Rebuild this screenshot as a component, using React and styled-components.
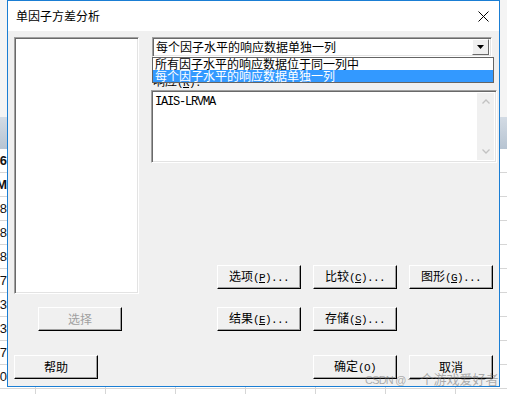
import React from "react";
import styled, { createGlobalStyle } from "styled-components";

const GlobalStyle = createGlobalStyle`
  html, body { margin: 0; padding: 0; }
  body {
    width: 507px;
    height: 394px;
    overflow: hidden;
    font-family: "Noto Sans CJK SC", sans-serif;
  }
`;

/* spreadsheet behind the dialog */
const Sheet = styled.div`
  position: relative;
  width: 507px;
  height: 394px;
  overflow: hidden;
  background: #fff;
  display: flex;
  flex-direction: column;
`;

const SheetTop = styled.div`
  height: 117px;
  flex: none;
  background: #f4f4f4;
`;

const SheetHead = styled.div`
  height: 32px;
  flex: none;
  background: linear-gradient(#d3dbe4, #b7c4d2);
`;

const SheetRow = styled.div`
  height: 24px;
  flex: none;
  box-sizing: border-box;
  border-bottom: 1px solid #d6d6d6;
  background: repeating-linear-gradient(
    to right,
    transparent 0 35px,
    #d6d6d6 35px 36px,
    transparent 36px 70px
  );
  display: flex;
  align-items: center;
`;

const EdgeCell = styled.div`
  width: 7px;
  overflow: hidden;
  display: flex;
  justify-content: flex-end;
  white-space: nowrap;
  font-family: "Liberation Sans", sans-serif;
  font-size: 13px;
  font-weight: ${(p) => (p.$bold ? 700 : 400)};
  color: #111;
`;

/* dialog window */
const Dialog = styled.div`
  position: absolute;
  left: 7px;
  top: 0;
  width: 493px;
  height: 387px;
  box-sizing: border-box;
  border: 1px solid #1a7ed4;
  display: flex;
  flex-direction: column;
  color: #000;
  font-size: 12px;
  line-height: 12px;
`;

const TitleBar = styled.div`
  height: 30px;
  flex: none;
  background: #fff;
  display: flex;
  align-items: center;
  justify-content: space-between;
  padding: 0 10px 0 8px;
  font-size: 12px;
`;

const Client = styled.div`
  flex: 1;
  background: #f0f0f0;
  padding: 6px 2px 7px 6px;
  display: flex;
  flex-direction: column;
`;

const Main = styled.div`
  display: grid;
  grid-template-columns: 125px 346px;
  column-gap: 12px;
`;

const LeftCol = styled.div`
  display: flex;
  flex-direction: column;
  align-items: flex-start;
`;

const RightCol = styled.div`
  position: relative;
  display: flex;
  flex-direction: column;
  align-items: flex-start;
`;

const sunken = `
  box-sizing: border-box;
  border: 1px solid;
  border-color: #a0a0a0 #fff #fff #a0a0a0;
  box-shadow: inset 1px 1px #696969, inset -1px -1px #e3e3e3;
  background: #fff;
`;

const ListBox = styled.div`
  ${sunken}
  width: 125px;
  height: 257px;
`;

const Combo = styled.div`
  ${sunken}
  margin-left: 1px;
  width: 340px;
  height: 20px;
  padding: 2px;
  display: flex;
  align-items: center;
`;

const ComboText = styled.span`
  flex: 1;
  padding-left: 1px;
`;

const DropButton = styled.div`
  width: 17px;
  height: 16px;
  box-sizing: border-box;
  border: 1px solid;
  border-color: #fff #696969 #696969 #fff;
  background: #f0f0f0;
  display: flex;
  align-items: center;
  justify-content: center;
`;

const DropList = styled.div`
  position: absolute;
  left: 1px;
  top: 20px;
  width: 342px;
  box-sizing: border-box;
  border: 1px solid #646464;
  background: #fff;
  z-index: 2;
`;

const DropItem = styled.div`
  height: 12px;
  line-height: 12px;
  padding-left: 2px;
  white-space: nowrap;
  background: ${(p) => (p.$selected ? "#3399ff" : "#fff")};
  color: ${(p) => (p.$selected ? "#fff" : "#000")};
`;

const FieldLabel = styled.div`
  margin: 18px 0 0 2px;
  height: 15px;
  line-height: 12px;
`;

const TextBox = styled.div`
  ${sunken}
  width: 346px;
  height: 73px;
  padding: 2px;
  display: flex;
`;

const TextContent = styled.div`
  flex: 1;
  padding: 3px 0 0 1px;
  font-family: "Liberation Mono", monospace;
  font-size: 12px;
  letter-spacing: -1.2px;
  line-height: 12px;
`;

const ScrollTrack = styled.div`
  width: 17px;
  background: #f0f0f0;
  display: flex;
  flex-direction: column;
  justify-content: space-between;
`;

const ScrollArrow = styled.div`
  height: 17px;
  display: flex;
  align-items: center;
  justify-content: center;
`;

const ButtonGrid = styled.div`
  margin: 102px 0 0 66px;
  display: grid;
  grid-template-columns: repeat(3, 84px);
  grid-auto-rows: 24px;
  column-gap: 12px;
  row-gap: 18px;
`;

const Button = styled.button`
  width: 84px;
  height: 24px;
  margin: 0;
  padding: 0;
  box-sizing: border-box;
  border: 1px solid;
  border-color: #fff #000 #000 #fff;
  box-shadow: inset -1px -1px #a0a0a0;
  background: #f0f0f0;
  font-family: "Noto Sans CJK SC", sans-serif;
  font-size: 12px;
  line-height: 12px;
  color: ${(p) => (p.disabled ? "#a0a0a0" : "#000")};
  white-space: nowrap;
`;

const SelectButton = styled(Button)`
  margin: 13px 0 0 24px;
`;

const Footer = styled.div`
  margin-top: 24px;
  padding-right: 4px;
  display: flex;
  gap: 12px;
`;

const FooterRight = styled.div`
  margin-left: auto;
  display: flex;
  gap: 12px;
`;

const Latin = styled.span`
  font-family: "Liberation Mono", monospace;
  font-size: 11px;
  letter-spacing: -0.6px;
`;

const Key = styled.span`
  text-decoration: underline;
  text-underline-offset: 1px;
`;

const Watermark = styled.div`
  position: absolute;
  left: 365px;
  top: 371px;
  font-family: "Noto Sans CJK SC", sans-serif;
  font-size: 13px;
  line-height: 16px;
  color: rgba(110, 110, 110, 0.55);
  white-space: nowrap;
  z-index: 5;
`;

const WatermarkLatin = styled.span`
  font-family: "Liberation Sans", sans-serif;
  font-size: 11px;
  letter-spacing: -0.8px;
  margin-right: 2px;
`;

function Mnemonic({ cn, k, tail = "" }) {
  return (
    <>
      {cn}
      <Latin>
        (<Key>{k}</Key>){tail}
      </Latin>
    </>
  );
}

const leftDigits = [
  ["6", true],
  ["M", true],
  ["8"],
  ["8"],
  ["8"],
  ["7"],
  ["3"],
  ["3"],
  ["7"],
  ["0"],
  [""],
];

export default function App() {
  return (
    <Sheet>
      <GlobalStyle />
      <SheetTop />
      <SheetHead />
      {leftDigits.map(([d, bold], i) => (
        <SheetRow key={i}>
          <EdgeCell $bold={bold}>{d}</EdgeCell>
        </SheetRow>
      ))}

      <Dialog>
        <TitleBar>
          <span>单因子方差分析</span>
          <svg width="11" height="11" viewBox="0 0 11 11">
            <path d="M0.5 0.5 L10.5 10.5 M10.5 0.5 L0.5 10.5" stroke="#000" strokeWidth="1" />
          </svg>
        </TitleBar>

        <Client>
          <Main>
            <LeftCol>
              <ListBox />
              <SelectButton disabled>选择</SelectButton>
            </LeftCol>

            <RightCol>
              <Combo>
                <ComboText>每个因子水平的响应数据单独一列</ComboText>
                <DropButton>
                  <svg width="7" height="4" viewBox="0 0 7 4">
                    <path d="M0 0 H7 L3.5 4 Z" fill="#000" />
                  </svg>
                </DropButton>
              </Combo>
              <DropList>
                <DropItem>所有因子水平的响应数据位于同一列中</DropItem>
                <DropItem $selected>每个因子水平的响应数据单独一列</DropItem>
              </DropList>

              <FieldLabel>
                <Mnemonic cn="响应" k="R" tail=":" />
              </FieldLabel>
              <TextBox>
                <TextContent>IAIS-LRVMA</TextContent>
                <ScrollTrack>
                  <ScrollArrow>
                    <svg width="8" height="5" viewBox="0 0 8 5">
                      <path d="M0.5 4.5 L4 1 L7.5 4.5" stroke="#c2c2c2" strokeWidth="1.3" fill="none" />
                    </svg>
                  </ScrollArrow>
                  <ScrollArrow>
                    <svg width="8" height="5" viewBox="0 0 8 5">
                      <path d="M0.5 0.5 L4 4 L7.5 0.5" stroke="#c2c2c2" strokeWidth="1.3" fill="none" />
                    </svg>
                  </ScrollArrow>
                </ScrollTrack>
              </TextBox>

              <ButtonGrid>
                <Button>
                  <Mnemonic cn="选项" k="P" tail="..." />
                </Button>
                <Button>
                  <Mnemonic cn="比较" k="C" tail="..." />
                </Button>
                <Button>
                  <Mnemonic cn="图形" k="G" tail="..." />
                </Button>
                <Button>
                  <Mnemonic cn="结果" k="E" tail="..." />
                </Button>
                <Button>
                  <Mnemonic cn="存储" k="S" tail="..." />
                </Button>
              </ButtonGrid>
            </RightCol>
          </Main>

          <Footer>
            <Button>帮助</Button>
            <FooterRight>
              <Button>
                确定<Latin>(O)</Latin>
              </Button>
              <Button>取消</Button>
            </FooterRight>
          </Footer>
        </Client>
      </Dialog>

      <Watermark>
        <WatermarkLatin>CSDN @</WatermarkLatin>一个游戏爱好者
      </Watermark>
    </Sheet>
  );
}
